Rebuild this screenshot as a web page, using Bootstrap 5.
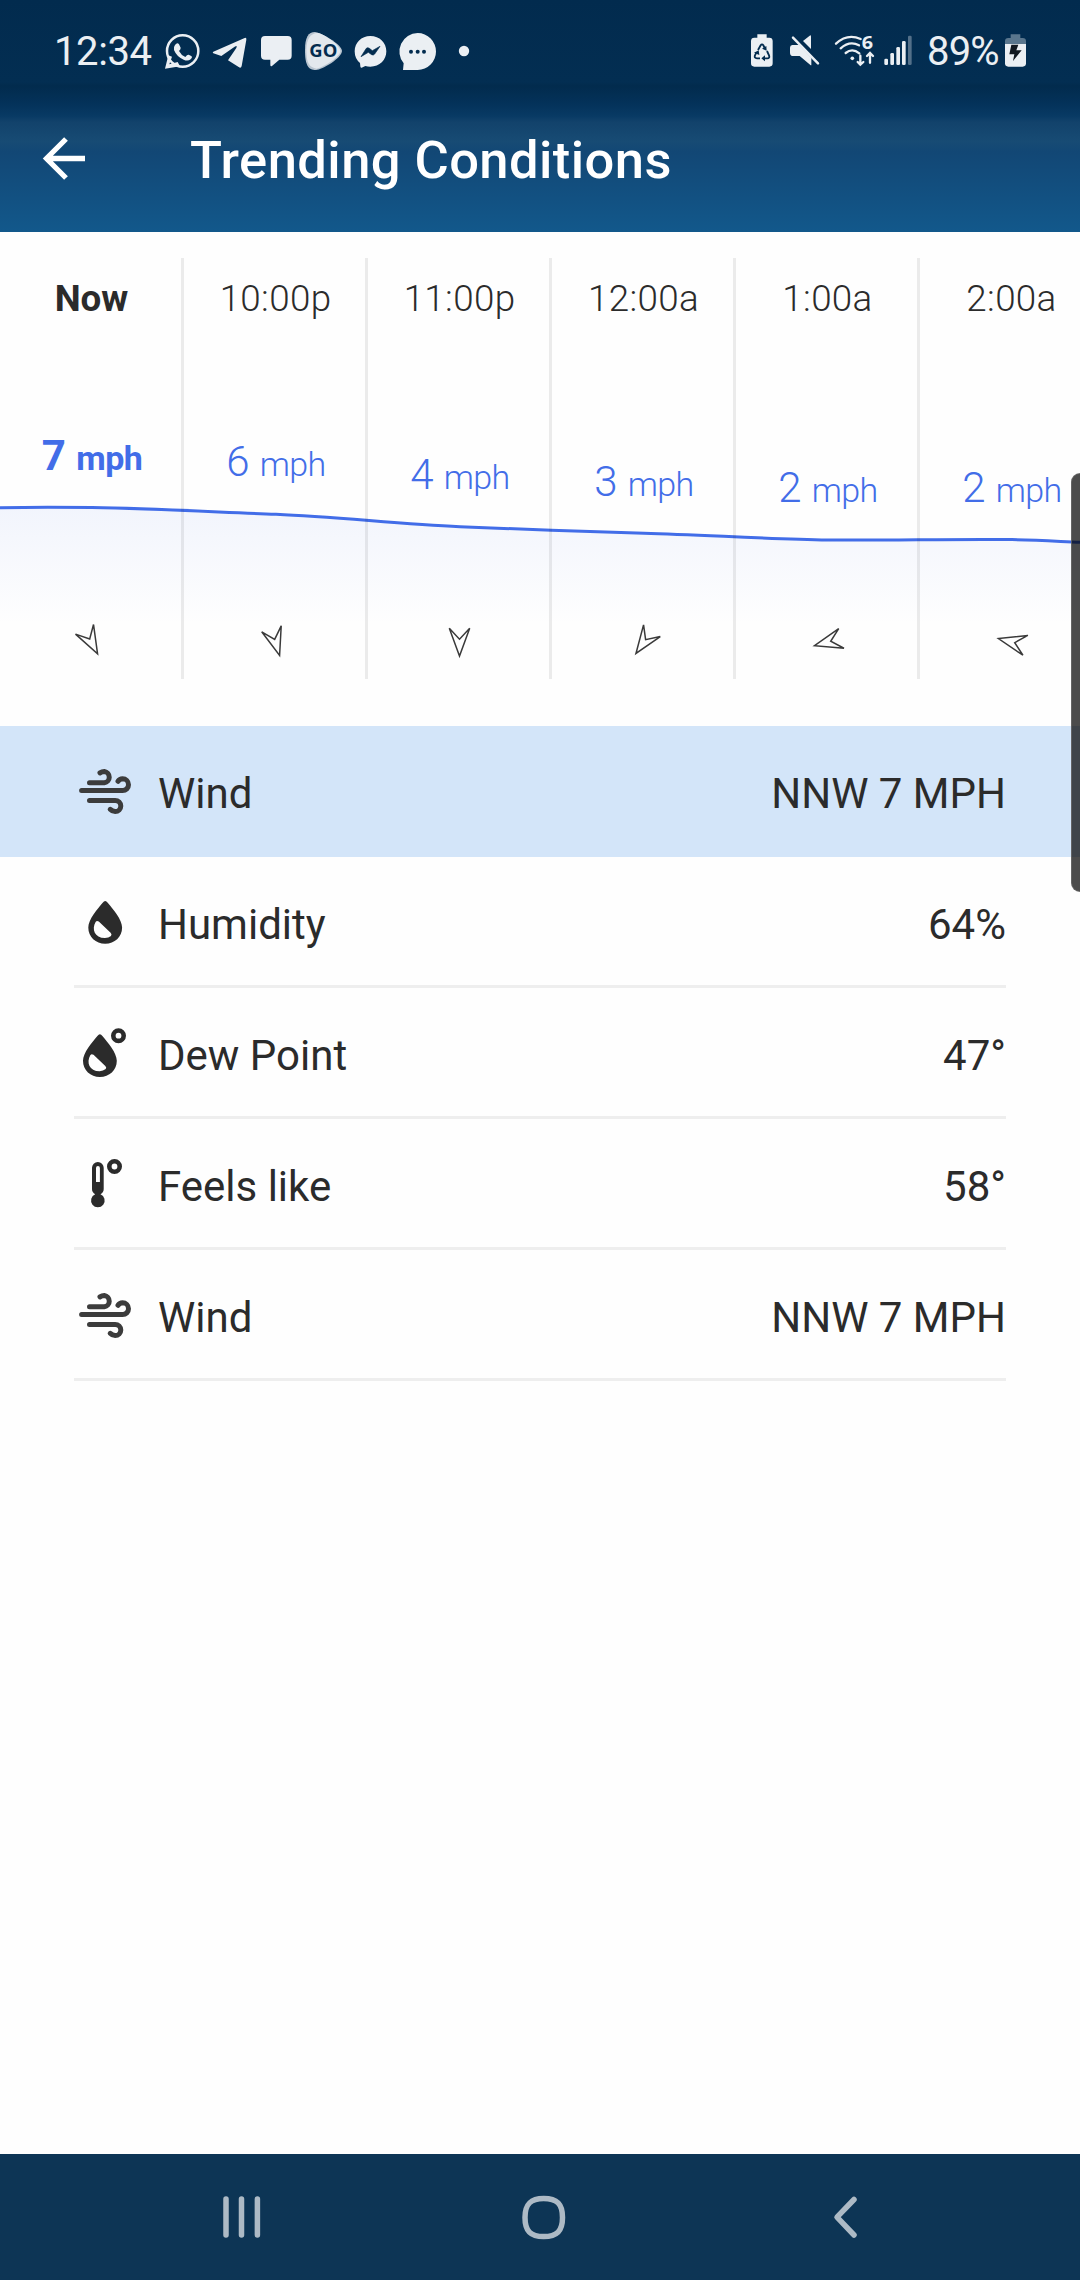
<!DOCTYPE html>
<html lang="en">
<head>
<meta charset="utf-8">
<meta name="viewport" content="width=device-width, initial-scale=1">
<title>Trending Conditions</title>
<link href="https://cdn.jsdelivr.net/npm/bootstrap@5.3.0/dist/css/bootstrap.min.css" rel="stylesheet">
<style>
  body { font-family: Roboto, "Noto Sans", sans-serif; color: #2b2b2b; background: #fefefe; }
  svg { display: block; flex: none; }
  .screen { width: 1080px; height: 2280px; overflow: hidden; }
  .top-area { height: 232px; color: #fff; background: linear-gradient(#022b4e 0, #032e52 82px, #022b4d 86px, #04325a 104px, #083a64 116px, #12426b 122px, #174b74 141px, #124775 152px, #12588b 231px); }
  .status { height: 88px; padding: 30px 0 0 54px; color: #ebeff3; }
  .status svg { height: 42px; fill: currentColor; }
  .clock { width: 110px; font-size: 40px; line-height: 43px; letter-spacing: -.4px; }
  .pct { width: 74px; font-size: 40px; line-height: 43px; letter-spacing: -.8px; }
  .app-bar { height: 144px; padding-left: 37px; }
  .app-title { font-size: 52.5px; line-height: 62px; font-weight: 500; letter-spacing: .43px; margin: 0 0 1px 99px; }
  .hours { height: 494px; padding-top: 26px; }
  .curve { top: 0; left: 0; z-index: 0; }
  .hour { width: 184px; height: 421px; flex: none; padding: 19px 0 0 3px; border-right: 3px solid rgba(0,0,0,.075); font-weight: 300; z-index: 1; }
  .hour.now { font-weight: 700; }
  .time { height: 44px; line-height: 44px; font-size: 36.75px; letter-spacing: .35px; margin-left: -1px; }
  .now .time { letter-spacing: 0; }
  .speed { height: 48px; line-height: 48px; font-size: 42px; color: #426de8; white-space: nowrap; margin-bottom: -4px; position: relative; padding-top: 2px; }
  .unit { font-size: 34px; letter-spacing: -.6px; }
  .cond { height: 131px; padding: 0 74px; font-size: 42px; }
  .cond-in { height: 131px; border-bottom: 3px solid #eee; }
  .cond.picked { background: #d3e5f9; }
  .cond.picked .cond-in { border-color: transparent; }
  .cond-in span { padding-top: 7px; line-height: 121px; }
  .ico { fill: #2b2b2b; }
  .wind-line { fill: none; stroke: #3c3c3c; stroke-width: 5; stroke-linecap: round; }
  .thumb { right: 0; top: 473px; width: 9px; height: 419px; background: rgba(0,0,0,.7); border: 1px solid rgba(110,110,110,.75); border-right: 0; border-radius: 10px 0 0 10px; z-index: 3; }
  .sys-nav { height: 126px; background: #0d3555; padding: 0 215px; }
  .sys-nav svg { fill: none; stroke: #adbac5; stroke-width: 5.5; stroke-linecap: round; stroke-linejoin: round; }
</style>
</head>
<body>
<svg width="0" height="0" class="position-absolute">
  <defs>
    <g id="windIcon"><path class="wind-line" d="M7.6 64.6H48.6a5.900 5.900 0 0 0 0-11.800q-3 .200-4.600 2.500M15.500 56.800H30.300a5.700 5.700 0 0 0 0-11.300q-2.300 0-4.300 1.400M15.500 74.400H41.200a5.600 5.600 0 0 1 0 11.200q-3-.100-5-2.300"/></g>
    <g id="dropIcon"><path fill-rule="evenodd" d="M28.700 45.700Q31.200 42.400 33.700 45.700C39 52 48.100 62.500 48.100 70.500C48.100 80 40.600 86.700 31.200 86.700S14.300 80 14.300 70.500C14.300 62.500 23.400 52 28.700 45.700ZM24.800 64.600Q22.800 63.200 21.600 65C17.500 72 20.500 81 31 81.100Q34.500 81 37 78.900Q38.200 77.300 36.600 75.700Z"/></g>
    <path id="windArrow" d="M-10.200-13.800L0-2.800L10.200-13.800L0 14Z" fill="none" stroke="#3a3a3a" stroke-width="1.500"/>
  </defs>
</svg>
<div class="screen d-flex flex-column position-relative">
  <header class="top-area flex-shrink-0">
    <div class="status d-flex">
      <div class="clock">12:34</div>
      <svg width="44" viewBox="492 90 132 126"><circle cx="548" cy="153" r="47" fill="none" stroke="currentColor" stroke-width="7.500"/><path d="M495 206L505 166L516 170L508 193L533 186L540 199Z"/><path d="M525 135q7-9 12-2l5 10q1 4-5 10q6 12 19 18q6-8 10-7l9 5q3 4-3 9q-9 7-21 1q-21-9-29-29q-2-9 3-15z"/></svg>
      <svg width="50" viewBox="624 90 150 126"><path d="M640 155L734 114Q740 112 739 119L725 198Q723 206 716 201L684 181L709 144Q713 134 704 140L664 168L640 160Q636 157 640 155Z"/></svg>
      <svg width="44" viewBox="774 90 132 126"><path d="M795 108H863Q875 108 875 120V167Q875 179 863 179H838L816 198Q811 201 811 194V179H795Q783 179 783 167V120Q783 108 795 108Z"/></svg>
      <svg width="46" viewBox="906 90 138 126"><path fill="#b9c5d0" d="M945 96C958 96 1026 132 1026 153S965 210 948 210C924 210 915 195 915 150C915 112 925 96 945 96Z"/><path fill="#e3e8ed" d="M955 99C970 101 1021 135 1021 153S971 201 950 206C928 202 919 190 919 150C919 117 932 98 955 99Z"/><text x="928" y="171" font-family="Open Sans, sans-serif" font-weight="700" font-size="52" textLength="84" lengthAdjust="spacingAndGlyphs" fill="#032c4f">GO</text></svg>
      <svg width="46" viewBox="1044 90 138 126"><path d="M1111 108C1139 108 1159 128 1159 154S1139 200 1111 200Q1103 200 1096 198L1085 203Q1081 204 1081 199L1080 189Q1064 176 1064 154C1064 128 1084 108 1111 108Z"/><path d="M1083 170L1099 145Q1103 141 1108 145L1117 152L1140 139L1124 162Q1120 167 1115 164L1105 157Z" fill="#032c4f" stroke="#032c4f" stroke-width="2" stroke-linejoin="round"/></svg>
      <svg width="52" viewBox="1182 90 156 126"><path d="M1253 99A55 55.500 0 0 1 1253 210H1209L1211 190A55 55.500 0 0 1 1253 99Z"/><g fill="#032c4f"><circle cx="1233" cy="155" r="6"/><circle cx="1253" cy="155" r="6"/><circle cx="1272" cy="155" r="6"/></g></svg>
      <svg width="50" viewBox="1338 90 150 126"><circle cx="1392" cy="153" r="15.500"/></svg>
      <svg width="44" viewBox="132 90 132 126" class="ms-auto"><path d="M172 103H200V113H208Q218 113 218 123V190Q218 200 208 200H163Q153 200 153 190V123Q153 113 163 113H172Z"/><g fill="none" stroke="#032c4f" stroke-width="5.500"><path d="M174 150L182 136Q186 130 190 136L194 144M201 153L207 166Q210 175 202 175H191M180 175H171Q162 175 165 166L169 158"/></g><g fill="#032c4f"><path d="M200 152L186 146L199 138ZM195 166V184L184 175ZM162 158L176 151L178 165Z"/></g></svg>
      <svg width="44" viewBox="264 90 132 126"><path d="M277 135H297L334 173V196L332 196L299 168H280Q270 168 270 158V143Q270 136 277 135ZM309 123L329 107Q333 104 333 110V147Z"/><path d="M283 108L360 187" stroke="#032c4f" stroke-width="8"/><path d="M279 113L354 190" stroke="currentColor" stroke-width="7.500" stroke-linecap="round"/></svg>
      <svg width="49" viewBox="396 90 147 126"><g fill="none" stroke="currentColor" stroke-width="7" stroke-linecap="round"><path d="M408 131Q442 99 482 117M422 145Q449 121 477 136M437 159Q457 143 478 160M481 167V194M473 186L481 194L490 186M510 188V160M501 168L510 159L519 168"/></g><circle cx="457" cy="175" r="5.500"/><text x="485" y="146" font-family="Open Sans, sans-serif" font-weight="700" font-size="51" textLength="34" lengthAdjust="spacingAndGlyphs">6</text></svg>
      <svg width="46" viewBox="543 90 138 126"><rect x="553" y="176" width="11" height="19" rx="4"/><rect x="571" y="159" width="11" height="36" rx="4"/><rect x="589" y="141" width="11" height="54" rx="4"/><rect x="606" y="123" width="11" height="72" rx="4"/><rect x="624" y="107" width="11" height="88" rx="4" opacity=".35"/></svg>
      <div class="pct">89%</div>
      <svg width="79" viewBox="903 90 237 126"><path opacity=".38" d="M932 103H961V114H968Q978 114 978 124V132H915V124Q915 114 925 114H932Z"/><path d="M915 132H978V190Q978 200 968 200H925Q915 200 915 190Z"/><path fill="#111820" d="M934 134H955L949 151H965L939 183L943 163H928Z"/></svg>
    </div>
    <div class="app-bar d-flex align-items-center">
      <svg width="54" height="54" viewBox="0 0 54 54" fill="none" stroke="#fff" stroke-width="5.300"><path d="M48 25.500H10M29 6L9.500 25.500L29 45"/></svg>
      <h1 class="app-title">Trending Conditions</h1>
    </div>
  </header>

  <section class="hours d-flex position-relative overflow-hidden flex-shrink-0 text-center">
    <svg class="curve position-absolute" width="1080" height="494" viewBox="0 232 1080 494">
      <defs><linearGradient id="shade" gradientUnits="userSpaceOnUse" x1="0" y1="507" x2="0" y2="625"><stop offset="0" stop-color="#426de8" stop-opacity=".065"/><stop offset="1" stop-color="#426de8" stop-opacity="0"/></linearGradient></defs>
      <path fill="url(#shade)" d="M0 507.700C30 507 62 507 92 507.600C153 508.500 215 512 276 514.300C337 517 399 524 460 526.800C521 529 583 531.500 644 533.300C705 535 767 539 828 540C889 540.500 951 539 1012 539.600C1040 540 1060 541.500 1080 542.300V640H0Z"/>
      <path fill="none" stroke="#426de8" stroke-width="3" d="M0 507.700C30 507 62 507 92 507.600C153 508.500 215 512 276 514.300C337 517 399 524 460 526.800C521 529 583 531.500 644 533.300C705 535 767 539 828 540C889 540.500 951 539 1012 539.600C1040 540 1060 541.500 1080 542.300"/>
      <use href="#windArrow" transform="translate(91 641.500) rotate(-28)"/>
      <use href="#windArrow" transform="translate(275.500 642) rotate(-17)"/>
      <use href="#windArrow" transform="translate(459.500 642)"/>
      <use href="#windArrow" transform="translate(644 642) rotate(35)"/>
      <use href="#windArrow" transform="translate(828 642) rotate(75)"/>
      <use href="#windArrow" transform="translate(1012 642) rotate(104)"/>
    </svg>
    <div class="hour now position-relative"><div class="time">Now</div><div class="speed" style="margin-top:108.500px">7 <span class="unit">mph</span></div></div>
    <div class="hour position-relative"><div class="time">10:00p</div><div class="speed" style="margin-top:115px">6 <span class="unit">mph</span></div></div>
    <div class="hour position-relative"><div class="time">11:00p</div><div class="speed" style="margin-top:128px">4 <span class="unit">mph</span></div></div>
    <div class="hour position-relative"><div class="time">12:00a</div><div class="speed" style="margin-top:135px">3 <span class="unit">mph</span></div></div>
    <div class="hour position-relative"><div class="time">1:00a</div><div class="speed" style="margin-top:141px">2 <span class="unit">mph</span></div></div>
    <div class="hour position-relative"><div class="time">2:00a</div><div class="speed" style="margin-top:141px">2 <span class="unit">mph</span></div></div>
  </section>

  <main class="flex-grow-1">
    <div class="cond picked"><div class="cond-in d-flex"><svg class="ico" width="84" height="128"><use href="#windIcon"/></svg><span>Wind</span><span class="ms-auto">NNW 7 MPH</span></div></div>
    <div class="cond"><div class="cond-in d-flex"><svg class="ico" width="84" height="128"><use href="#dropIcon"/></svg><span>Humidity</span><span class="ms-auto">64%</span></div></div>
    <div class="cond"><div class="cond-in d-flex"><svg class="ico" width="84" height="128"><use href="#dropIcon" transform="translate(-5.300 2.200)"/><circle cx="44.500" cy="47.700" r="5.200" fill="none" stroke="#2b2b2b" stroke-width="4.600"/></svg><span>Dew Point</span><span class="ms-auto">47°</span></div></div>
    <div class="cond"><div class="cond-in d-flex"><svg class="ico" width="84" height="128"><path fill-rule="evenodd" d="M18 48.800a5.850 5.850 0 0 1 11.700 0V70Q29.700 73.500 26.500 75.300A6.800 6.800 0 1 1 21.200 75.300Q18 73.500 18 70ZM22 49V63H25.900V49a1.950 1.950 0 0 0-3.900 0Z"/><circle cx="40.500" cy="47.500" r="5.200" fill="none" stroke="#2b2b2b" stroke-width="4.600"/></svg><span>Feels like</span><span class="ms-auto">58°</span></div></div>
    <div class="cond"><div class="cond-in d-flex"><svg class="ico" width="84" height="128"><use href="#windIcon"/></svg><span>Wind</span><span class="ms-auto">NNW 7 MPH</span></div></div>
  </main>

  <nav class="sys-nav d-flex align-items-center justify-content-between flex-shrink-0">
    <svg width="54" height="54" viewBox="0 0 54 54"><path d="M11 9V45M26.500 9V45M42.400 9V45"/></svg>
    <svg width="54" height="54" viewBox="0 0 54 54"><path d="M30.700 8.500C44 8.500 49.500 14 49.500 27.500S44 46.500 30.700 46.500S12 41 12 27.500S17.500 8.500 30.700 8.500Z"/></svg>
    <svg width="54" height="54" viewBox="0 0 54 54"><path d="M43 9.500L26 27.200L43 45"/></svg>
  </nav>
  <div class="thumb position-absolute"></div>
</div>
<script src="https://cdn.jsdelivr.net/npm/bootstrap@5.3.0/dist/js/bootstrap.bundle.min.js"></script>
</body>
</html>
